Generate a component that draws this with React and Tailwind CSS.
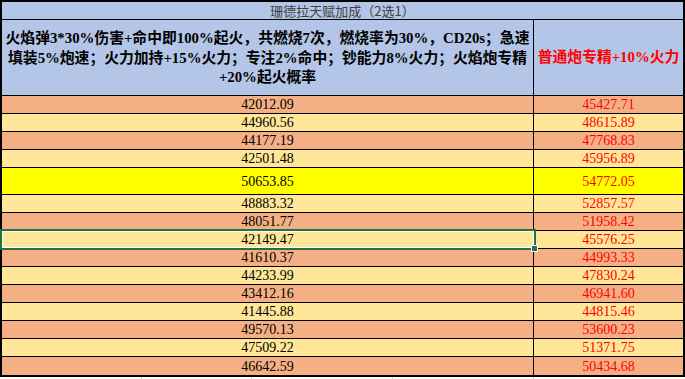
const rows = [
  { a: "42012.09", b: "45427.71", bg: "bg-[#f4b084]" },
  { a: "44960.56", b: "48615.89", bg: "bg-[#ffe699]" },
  { a: "44177.19", b: "47768.83", bg: "bg-[#f4b084]" },
  { a: "42501.48", b: "45956.89", bg: "bg-[#ffe699]" },
  { a: "50653.85", b: "54772.05", bg: "bg-[#ffff00]", tall: true },
  { a: "48883.32", b: "52857.57", bg: "bg-[#ffe699]" },
  { a: "48051.77", b: "51958.42", bg: "bg-[#f4b084]" },
  { a: "42149.47", b: "45576.25", bg: "bg-[#ffe699]" },
  { a: "41610.37", b: "44993.33", bg: "bg-[#f4b084]" },
  { a: "44233.99", b: "47830.24", bg: "bg-[#ffe699]" },
  { a: "43412.16", b: "46941.60", bg: "bg-[#f4b084]" },
  { a: "41445.88", b: "44815.46", bg: "bg-[#ffe699]" },
  { a: "49570.13", b: "53600.23", bg: "bg-[#f4b084]" },
  { a: "47509.22", b: "51371.75", bg: "bg-[#ffe699]" },
  { a: "46642.59", b: "50434.68", bg: "bg-[#f4b084]" },
];

const serif = "font-['Liberation_Serif','Noto_Sans_CJK_SC',serif]";

export default function App() {
  return (
    <div className="relative h-[379px] w-[685px] overflow-hidden bg-white">
      <div className="w-[685px] border-2 border-black">
        <div className="flex h-[18px] items-center justify-center border-b border-black bg-[#b4c6e7] font-['Noto_Sans_CJK_SC',sans-serif] text-[13px] leading-none text-[#404040]">
          珊德拉天赋加成（2选1）
        </div>

        <div className="flex h-[76px] border-b border-black bg-[#b4c6e7]">
          <div
            className={`flex w-[532px] flex-col items-center justify-center border-r border-black pt-[2px] text-[14.8px] font-bold leading-[19.5px] text-black ${serif}`}
          >
            <span className="whitespace-nowrap">
              火焰弹3*30%伤害+命中即100%起火，共燃烧7次，燃烧率为30%，CD20s；急速
            </span>
            <span className="whitespace-nowrap">
              填装5%炮速；火力加持+15%火力；专注2%命中；钞能力8%火力；火焰炮专精
            </span>
            <span className="whitespace-nowrap">+20%起火概率</span>
          </div>
          <div
            className={`flex flex-1 items-center justify-center whitespace-nowrap text-[14.8px] font-bold text-[#ff0000] ${serif}`}
          >
            普通炮专精+10%火力
          </div>
        </div>

        {rows.map((r, i) => (
          <div
            key={r.a}
            className={`flex ${r.tall ? "h-[27px]" : "h-[18px]"} ${
              i < rows.length - 1 ? "border-b border-black" : ""
            } ${r.bg} text-[14px] leading-none ${serif}`}
          >
            <div className="flex w-[532px] items-center justify-center border-r border-black pt-[1px] text-black">
              {r.a}
            </div>
            <div className="flex flex-1 items-center justify-center pt-[1px] text-[#ff0000]">
              {r.b}
            </div>
          </div>
        ))}
      </div>

      <div className="flex h-[2px]">
        <div className="w-[142px] border-r border-[#d4d4d4]" />
        <div className="w-[110px] border-r border-[#d4d4d4]" />
        <div className="w-[141px] border-r border-[#d4d4d4]" />
        <div className="w-[141px] border-r border-[#d4d4d4]" />
      </div>

      {/* selected cell */}
      <div className="absolute left-0 top-[229px] h-[21px] w-[536px] border-2 border-[#217346]">
        <div className="h-full w-full border border-white" />
      </div>
      <div className="absolute left-[531px] top-[245px] h-[7px] w-[7px] border border-white bg-[#217346]" />
    </div>
  );
}
